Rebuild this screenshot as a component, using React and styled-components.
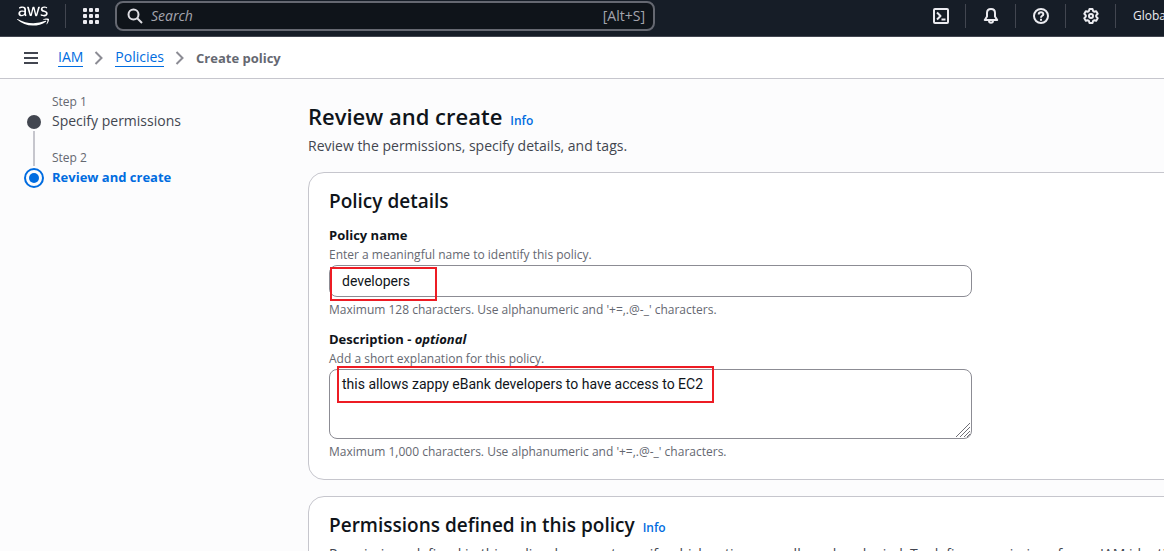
import React from "react";
import styled, { createGlobalStyle } from "styled-components";
import { FaAws } from "react-icons/fa";

const GlobalStyle = createGlobalStyle`
  * { box-sizing: border-box; }
  html, body { margin: 0; overflow-x: hidden; scrollbar-width: none; }
  body {
    background: #fcfcfd;
    color: #0f141a;
    font-family: "Open Sans", "Noto Sans", sans-serif;
    font-size: 14px;
    line-height: 20px;
  }
  h1, h2, p, ol { margin: 0; padding: 0; }
  button { font: inherit; border: 0; padding: 0; background: none; cursor: pointer; }
`;

const TopBar = styled.header`
  display: flex;
  align-items: center;
  height: 37px;
  padding-bottom: 4px;
  background: #161d27;
  border-bottom: 1px solid #424650;
  overflow: hidden;
`;

const TopGroup = styled.div`
  display: flex;
  align-items: center;
  flex: ${(p) => (p.$grow ? "1 1 auto" : "0 0 auto")};
`;

const LogoLink = styled.a`
  display: flex;
  justify-content: center;
  width: 65px;
  color: #fff;
`;

const IconButton = styled.button`
  display: flex;
  align-items: center;
  justify-content: center;
  width: 49px;
  height: 32px;
  color: #ebebf0;
`;

const Divider = styled.span`
  width: 1px;
  height: 24px;
  background: #424650;
`;

const SearchBox = styled.label`
  display: flex;
  align-items: center;
  gap: 8px;
  flex: 0 1 540px;
  height: 30px;
  padding: 0 8px 0 10px;
  border: 2px solid #656871;
  border-radius: 8px;
  background: #0f141a;
  color: #dedee3;
`;

const SearchInput = styled.input`
  flex: 1;
  min-width: 0;
  padding: 0;
  border: 0;
  outline: 0;
  background: transparent;
  color: #fff;
  font: inherit;
  &::placeholder { color: #a4a4ad; font-style: italic; opacity: 1; }
`;

const Shortcut = styled.span`
  color: #a4a4ad;
`;

const Region = styled.button`
  width: 48px;
  padding-left: 17px;
  color: #ebebf0;
  font-size: 12px;
  text-align: left;
  white-space: nowrap;
`;

const CrumbBar = styled.nav`
  display: flex;
  align-items: center;
  gap: 11px;
  height: 42px;
  padding: 0 23px;
  background: #fff;
  border-bottom: 1px solid #c6c6cd;
`;

const MenuButton = styled.button`
  display: flex;
  margin-right: 8px;
  color: #424650;
`;

const Crumb = styled.a`
  color: #006ce0;
  line-height: 18px;
  text-decoration: none;
  border-bottom: 1px solid #006ce0;
`;

const CurrentCrumb = styled.span`
  color: #656871;
  font-size: 13px;
  font-weight: 700;
`;

const Page = styled.div`
  display: flex;
  align-items: flex-start;
`;

const Steps = styled.ol`
  flex: 0 0 308px;
  padding: 13px 24px;
  list-style: none;
`;

const Step = styled.li`
  display: grid;
  grid-template-columns: 20px 1fr;
  grid-template-rows: 20px 36px;
  column-gap: 8px;
  height: 56px;
`;

const StepNumber = styled.span`
  grid-column: 2;
  color: #656871;
  font-size: 12px;
  line-height: 20px;
`;

const StepMark = styled.svg`
  display: block;
  grid-column: 1;
  grid-row: 1 / span 2;
`;

const StepLink = styled.a`
  grid-column: 2;
  color: ${(p) => (p.$active ? "#006ce0" : "#424650")};
  font-size: ${(p) => (p.$active ? 13 : 14)}px;
  font-weight: ${(p) => (p.$active ? 700 : 400)};
  line-height: 18px;
  text-decoration: none;
`;

const Main = styled.main`
  flex: 1 0 899px;
  padding-top: 22px;
`;

const PageHeader = styled.div`
  padding-bottom: 16px;
  color: #424650;
`;

const TitleRow = styled.div`
  display: flex;
  align-items: baseline;
  gap: 8px;
`;

const Title = styled.h1`
  color: #0f141a;
  font-size: 22px;
  font-weight: 600;
  line-height: 30px;
  margin-bottom: 5px;
`;

const SectionTitle = styled.h2`
  color: #0f141a;
  font-size: 19px;
  font-weight: 600;
  line-height: 24px;
`;

const InfoLink = styled.a`
  color: #006ce0;
  font-size: 12px;
  font-weight: 600;
  text-decoration: none;
`;

const Card = styled.section`
  margin-bottom: 16px;
  padding: 16px 20px 14px;
  border: 1px solid #c6c6cd;
  border-radius: 16px;
  background: #fff;
`;

const Fields = styled.div`
  display: grid;
  gap: 6px;
  width: 75%;
  padding-top: 12px;
`;

const Field = styled.div`
  min-width: 0;
`;

const FieldLabel = styled.label`
  display: block;
  font-size: 13px;
  font-weight: 700;
`;

const Hint = styled.p`
  color: #656871;
  font-size: 12px;
  line-height: ${(p) => (p.$below ? "26px" : "20px")};
`;

const ControlWrap = styled.div`
  position: relative;
  display: flex;
`;

const TextInput = styled.input`
  width: 100%;
  height: 32px;
  padding: 0 12px;
  border: 1px solid #8c8c94;
  border-radius: 8px;
  background: #fff;
  color: #0f141a;
  font: 14px/20px Roboto, sans-serif;
`;

const TextArea = styled.textarea`
  width: 100%;
  height: 70px;
  padding: 4px 12px;
  border: 1px solid #8c8c94;
  border-radius: 8px;
  background: #fff;
  color: #0f141a;
  font: 14px/20px Roboto, sans-serif;
  resize: none;
`;

const Grip = styled.svg`
  position: absolute;
  right: 1px;
  bottom: 1px;
`;

const Highlight = styled.span`
  position: absolute;
  top: ${(p) => p.$top}px;
  left: ${(p) => p.$left}px;
  width: ${(p) => p.$width}px;
  height: ${(p) => p.$height}px;
  border: 2px solid #ed1c24;
  pointer-events: none;
`;

const CardText = styled.p`
  padding-top: 6px;
  color: #424650;
`;

const Svg = ({ size = 16, children }) => (
  <svg width={size} height={size} viewBox="0 0 16 16" fill="none" stroke="currentColor" strokeWidth="2" strokeLinejoin="round" aria-hidden="true">
    {children}
  </svg>
);

const Chevron = () => (
  <svg width="10" height="14" viewBox="0 0 10 14" fill="none" stroke="#8c8c94" strokeWidth="2" aria-hidden="true">
    <path d="M1.5 1l6 6-6 6" />
  </svg>
);

export default function App() {
  return (
    <>
      <GlobalStyle />
      <TopBar>
        <TopGroup $grow>
          <LogoLink href="#" aria-label="AWS home"><FaAws size={32} /></LogoLink>
          <Divider />
          <IconButton aria-label="Services">
            <svg width="16" height="16" viewBox="0 0 16 16" fill="currentColor" aria-hidden="true">
              {[0, 6, 12].map((y) => [0, 6, 12].map((x) => <rect key={`${x}-${y}`} x={x} y={y} width="4" height="4" rx="1" />))}
            </svg>
          </IconButton>
          <SearchBox>
            <Svg>
              <circle cx="6.5" cy="6.5" r="5" />
              <path d="M10 10l5 5" />
            </Svg>
            <SearchInput type="search" placeholder="Search" aria-label="Search" />
            <Shortcut>[Alt+S]</Shortcut>
          </SearchBox>
        </TopGroup>
        <TopGroup>
          <IconButton aria-label="CloudShell">
            <Svg>
              <rect x="1" y="1" width="14" height="14" rx="1" />
              <path d="M4 4.500L7.500 8 4 11.500M8.500 11.500H12.500" />
            </Svg>
          </IconButton>
          <Divider />
          <IconButton aria-label="Notifications">
            <Svg>
              <path d="M8 1C5.500 1 4 2.800 4 5v3.500L1.800 12h12.400L12 8.500V5c0-2.200-1.500-4-4-4z" />
              <path d="M6 12.500c0 3 4 3 4 0" />
            </Svg>
          </IconButton>
          <Divider />
          <IconButton aria-label="Help">
            <Svg>
              <circle cx="8" cy="8" r="7" />
              <path d="M5.700 6.500C5.700 3.500 10.500 3.700 10.300 6.300 10.200 7.900 8 7.700 8 9.700M8 10.800v2" />
            </Svg>
          </IconButton>
          <Divider />
          <IconButton aria-label="Settings">
            <Svg>
              <path d="M6.500 1h3l.6 2.100 1 .6 2.100-.5 1.500 2.600L13.200 7.400v1.200l1.500 1.600-1.500 2.600-2.100-.5-1 .6L9.500 15h-3l-.6-2.100-1-.6-2.100.5-1.500-2.600 1.500-1.600V7.400L1.300 5.800l1.500-2.600 2.100.5 1-.6z" />
              <circle cx="8" cy="8" r="2" />
            </Svg>
          </IconButton>
          <Divider />
          <Region>Global</Region>
        </TopGroup>
      </TopBar>
      <CrumbBar aria-label="Breadcrumbs">
        <MenuButton aria-label="Open navigation">
          <Svg><path d="M1 3h14M1 8h14M1 13h14" /></Svg>
        </MenuButton>
        <Crumb href="#">IAM</Crumb>
        <Chevron />
        <Crumb href="#">Policies</Crumb>
        <Chevron />
        <CurrentCrumb>Create policy</CurrentCrumb>
      </CrumbBar>
      <Page>
        <Steps>
          <Step>
            <StepMark width="20" height="76" viewBox="0 0 20 76" aria-hidden="true">
              <circle cx="10" cy="30" r="7" fill="#424650" />
              <path d="M10 39v35" stroke="#c6c6cd" strokeWidth="2" />
            </StepMark>
            <StepNumber>Step 1</StepNumber>
            <StepLink href="#">Specify permissions</StepLink>
          </Step>
          <Step>
            <StepMark width="20" height="40" viewBox="0 0 20 40" aria-hidden="true">
              <circle cx="10" cy="30" r="9" fill="none" stroke="#006ce0" strokeWidth="2" />
              <circle cx="10" cy="30" r="5" fill="#006ce0" />
            </StepMark>
            <StepNumber>Step 2</StepNumber>
            <StepLink href="#" $active aria-current="step">Review and create</StepLink>
          </Step>
        </Steps>
        <Main>
          <PageHeader>
            <TitleRow>
              <Title>Review and create</Title>
              <InfoLink href="#">Info</InfoLink>
            </TitleRow>
            <p>Review the permissions, specify details, and tags.</p>
          </PageHeader>
          <Card>
            <SectionTitle>Policy details</SectionTitle>
            <Fields>
              <Field>
                <FieldLabel htmlFor="policy-name">Policy name</FieldLabel>
                <Hint>Enter a meaningful name to identify this policy.</Hint>
                <ControlWrap>
                  <TextInput id="policy-name" defaultValue="developers" />
                  <Highlight $top={2} $left={1} $width={107} $height={34} />
                </ControlWrap>
                <Hint $below>Maximum 128 characters. Use alphanumeric and '+=,.@-_' characters.</Hint>
              </Field>
              <Field>
                <FieldLabel htmlFor="description">Description - <em>optional</em></FieldLabel>
                <Hint>Add a short explanation for this policy.</Hint>
                <ControlWrap>
                  <TextArea id="description" spellCheck={false} defaultValue="this allows zappy eBank developers to have access to EC2" />
                  <Grip width="16" height="16" viewBox="0 0 16 16" stroke="#6f6f76" aria-hidden="true">
                    <path d="M1 15L15 1M5 15L15 5M9 15l6-6M12 15l3-3" />
                  </Grip>
                  <Highlight $top={-3} $left={8} $width={377} $height={37} />
                </ControlWrap>
                <Hint $below>Maximum 1,000 characters. Use alphanumeric and '+=,.@-_' characters.</Hint>
              </Field>
            </Fields>
          </Card>
          <Card>
            <TitleRow>
              <SectionTitle>Permissions defined in this policy</SectionTitle>
              <InfoLink href="#">Info</InfoLink>
            </TitleRow>
            <CardText>Permissions defined in this policy document specify which actions are allowed or denied. To define permissions for an IAM identity (user, user group, or role), attach a policy to it</CardText>
          </Card>
        </Main>
      </Page>
    </>
  );
}
